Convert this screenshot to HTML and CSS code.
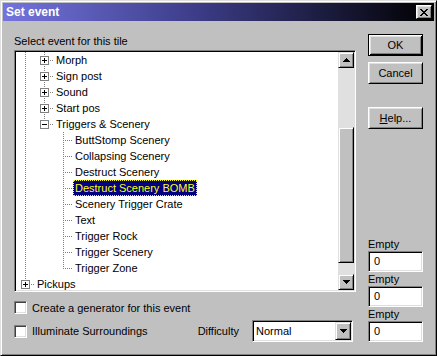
FILE: index.html
```html
<!DOCTYPE html>
<html>
<head>
<meta charset="utf-8">
<title>Set event</title>
<link rel="stylesheet" href="styles.css">
</head>
<body>
<div class="window">
  <div class="titlebar">
    <span class="title">Set event</span>
    <button class="close" aria-label="Close">
      <svg width="8" height="7" viewBox="0 0 8 7"><path fill="#000" d="M0 0h2v1H0zM6 0h2v1H6zM1 1h2v1H1zM5 1h2v1H5zM2 2h4v1H2zM3 3h2v1H3zM2 4h4v1H2zM1 5h2v1H1zM5 5h2v1H5zM0 6h2v1H0zM6 6h2v1H6z"/></svg>
    </button>
  </div>
  <div class="content">
    <div class="left">
      <div class="caption">Select event for this tile</div>
      <div class="tree">
        <div class="items">
          <div class="row"><span class="g v"></span><span class="g bf"><i class="pm plus"></i></span><span class="lbl">Morph</span></div>
          <div class="row"><span class="g v"></span><span class="g bf"><i class="pm plus"></i></span><span class="lbl">Sign post</span></div>
          <div class="row"><span class="g v"></span><span class="g bf"><i class="pm plus"></i></span><span class="lbl">Sound</span></div>
          <div class="row"><span class="g v"></span><span class="g bf"><i class="pm plus"></i></span><span class="lbl">Start pos</span></div>
          <div class="row"><span class="g v"></span><span class="g bt"><i class="pm minus"></i></span><span class="lbl">Triggers &amp; Scenery</span></div>
          <div class="row"><span class="g v"></span><span class="g n"></span><span class="g t"></span><span class="lbl">ButtStomp Scenery</span></div>
          <div class="row"><span class="g v"></span><span class="g n"></span><span class="g t"></span><span class="lbl">Collapsing Scenery</span></div>
          <div class="row"><span class="g v"></span><span class="g n"></span><span class="g t"></span><span class="lbl">Destruct Scenery</span></div>
          <div class="row"><span class="g v"></span><span class="g n"></span><span class="g t"></span><span class="lbl sel">Destruct Scenery BOMB</span></div>
          <div class="row"><span class="g v"></span><span class="g n"></span><span class="g t"></span><span class="lbl">Scenery Trigger Crate</span></div>
          <div class="row"><span class="g v"></span><span class="g n"></span><span class="g t"></span><span class="lbl">Text</span></div>
          <div class="row"><span class="g v"></span><span class="g n"></span><span class="g t"></span><span class="lbl">Trigger Rock</span></div>
          <div class="row"><span class="g v"></span><span class="g n"></span><span class="g t"></span><span class="lbl">Trigger Scenery</span></div>
          <div class="row"><span class="g v"></span><span class="g n"></span><span class="g l"></span><span class="lbl">Trigger Zone</span></div>
          <div class="row"><span class="g bt"><i class="pm plus"></i></span><span class="lbl">Pickups</span></div>
        </div>
        <div class="vscroll">
          <div class="sbtn"><svg width="7" height="4" viewBox="0 0 7 4"><path fill="#000" d="M3 0h1v1H3zM2 1h3v1H2zM1 2h5v1H1zM0 3h7v1H0z"/></svg></div>
          <div class="track upper"></div>
          <div class="thumb"></div>
          <div class="track lower"></div>
          <div class="sbtn"><svg width="7" height="4" viewBox="0 0 7 4"><path fill="#000" d="M0 0h7v1H0zM1 1h5v1H1zM2 2h3v1H2zM3 3h1v1H3z"/></svg></div>
        </div>
      </div>
      <label class="check first"><span class="cbox"></span>Create a generator for this event</label>
      <div class="optrow">
        <label class="check"><span class="cbox"></span>Illuminate Surroundings</label>
        <span class="diff">Difficulty</span>
        <div class="select">
          <span class="val">Normal</span>
          <span class="ddbtn"><svg width="7" height="4" viewBox="0 0 7 4"><path fill="#000" d="M0 0h7v1H0zM1 1h5v1H1zM2 2h3v1H2zM3 3h1v1H3z"/></svg></span>
        </div>
      </div>
    </div>
    <div class="right">
      <button class="btn default">OK</button>
      <button class="btn cancel">Cancel</button>
      <button class="btn help"><u>H</u>elp...</button>
      <div class="fields">
        <div class="field"><div class="flabel">Empty</div><div class="input">0</div></div>
        <div class="field"><div class="flabel">Empty</div><div class="input">0</div></div>
        <div class="field"><div class="flabel">Empty</div><div class="input">0</div></div>
      </div>
    </div>
  </div>
</div>
</body>
</html>
```
FILE: styles.css
```css
* { box-sizing: border-box; margin: 0; padding: 0; }

html, body {
  margin: 0;
  background: #c0c0c0;
  font: 11px "Liberation Sans", Arial, sans-serif;
  color: #000;
}

.window {
  width: 437px;
  height: 356px;
  background: #c0c0c0;
  border: 1px solid;
  border-color: #dfdfdf #000 #000 #dfdfdf;
  box-shadow: inset 1px 1px #fff, inset -1px -1px #808080;
  padding: 2px;
  display: flex;
  flex-direction: column;
}

.titlebar {
  height: 18px;
  flex: none;
  display: flex;
  align-items: center;
  padding-left: 3px;
  background: linear-gradient(90deg, #7474de 0%, #3c3c88 45%, #000000 100%);
}

.title {
  color: #fff;
  font-weight: bold;
  font-size: 12px;
  flex: 1;
}

.close {
  width: 16px;
  height: 14px;
  margin-right: 2px;
  display: flex;
  align-items: center;
  justify-content: center;
  background: #c0c0c0;
  border: 1px solid;
  border-color: #fff #000 #000 #fff;
  box-shadow: inset 1px 1px #dfdfdf, inset -1px -1px #808080;
  padding: 0 0 0 0;
}

.content {
  flex: 1;
  display: flex;
  gap: 12px;
  padding: 13px 11px 11px 11px;
}

.left {
  width: 342px;
  display: flex;
  flex-direction: column;
}

.caption {
  line-height: 14px;
  height: 14px;
  margin-bottom: 2px;
}

.tree {
  width: 342px;
  height: 242px;
  border: 1px solid;
  border-color: #808080 #fff #fff #808080;
  box-shadow: inset 1px 1px #000, inset -1px -1px #dfdfdf;
  padding: 1px;
  background: #fff;
  display: flex;
}

.items {
  flex: 1;
  overflow: hidden;
  background: #fff;
}

.row {
  height: 16px;
  display: flex;
  white-space: nowrap;
}

.g {
  width: 19px;
  height: 16px;
  flex: none;
  display: block;
}

.g.v {
  background: repeating-linear-gradient(to bottom, #808080 0 1px, transparent 1px 2px) 9px 0 / 1px 16px no-repeat;
}

.g.t {
  background:
    repeating-linear-gradient(to right, #808080 0 1px, transparent 1px 2px) 11px 8px / 8px 1px no-repeat,
    repeating-linear-gradient(to bottom, #808080 0 1px, transparent 1px 2px) 9px 0 / 1px 16px no-repeat;
}

.g.l {
  background:
    repeating-linear-gradient(to right, #808080 0 1px, transparent 1px 2px) 11px 8px / 8px 1px no-repeat,
    repeating-linear-gradient(to bottom, #808080 0 1px, transparent 1px 2px) 9px 0 / 1px 9px no-repeat;
}

.g.bf {
  background:
    repeating-linear-gradient(to right, #808080 0 1px, transparent 1px 2px) 15px 8px / 4px 1px no-repeat,
    repeating-linear-gradient(to bottom, #808080 0 1px, transparent 1px 2px) 9px 0 / 1px 16px no-repeat;
}

.g.bt {
  background:
    repeating-linear-gradient(to right, #808080 0 1px, transparent 1px 2px) 15px 8px / 4px 1px no-repeat,
    repeating-linear-gradient(to bottom, #808080 0 1px, transparent 1px 2px) 9px 0 / 1px 4px no-repeat;
}

.pm {
  display: block;
  width: 9px;
  height: 9px;
  margin: 4px 0 0 5px;
  border: 1px solid #808080;
  background: #fff;
}

.pm.plus {
  background:
    linear-gradient(#000, #000) 1px 3px / 5px 1px no-repeat,
    linear-gradient(#000, #000) 3px 1px / 1px 5px no-repeat,
    #fff;
}

.pm.minus {
  background:
    linear-gradient(#000, #000) 1px 3px / 5px 1px no-repeat,
    #fff;
}

.lbl {
  height: 16px;
  line-height: 14px;
  padding: 0 1px;
  border: 1px dotted transparent;
}

.lbl.sel {
  background: #000080;
  color: #ffff00;
  border-color: #ffff00;
}

.vscroll {
  width: 16px;
  flex: none;
  display: flex;
  flex-direction: column;
}

.sbtn, .thumb {
  width: 16px;
  background: #c0c0c0;
  border: 1px solid;
  border-color: #dfdfdf #000 #000 #dfdfdf;
  box-shadow: inset 1px 1px #fff, inset -1px -1px #808080;
}

.sbtn {
  height: 16px;
  display: flex;
  align-items: center;
  justify-content: center;
}

.track {
  background: #e0e0e0;
}

.track.upper { height: 59px; }
.thumb { height: 136px; }
.track.lower { height: 11px; }

.check {
  display: flex;
  align-items: center;
  gap: 5px;
  height: 13px;
  white-space: nowrap;
}

.check.first { margin-top: 9px; }

.cbox {
  width: 13px;
  height: 13px;
  flex: none;
  background: #fff;
  border: 1px solid;
  border-color: #808080 #fff #fff #808080;
  box-shadow: inset 1px 1px #404040, inset -1px -1px #dfdfdf;
}

.optrow {
  margin-top: 6px;
  height: 22px;
  display: flex;
  align-items: center;
}

.diff {
  margin-left: auto;
}

.select {
  width: 101px;
  height: 22px;
  margin-left: 13px;
  margin-right: 3px;
  display: flex;
  align-items: stretch;
  background: #fff;
  border: 1px solid;
  border-color: #808080 #fff #fff #808080;
  box-shadow: inset 1px 1px #000, inset -1px -1px #dfdfdf;
  padding: 1px;
}

.val {
  flex: 1;
  line-height: 18px;
  padding-left: 2px;
}

.ddbtn {
  width: 16px;
  display: flex;
  align-items: center;
  justify-content: center;
  background: #c0c0c0;
  border: 1px solid;
  border-color: #dfdfdf #000 #000 #dfdfdf;
  box-shadow: inset 1px 1px #fff, inset -1px -1px #808080;
}

.right {
  width: 55px;
  display: flex;
  flex-direction: column;
}

.btn {
  width: 55px;
  height: 22px;
  font: inherit;
  color: #000;
  background: #c0c0c0;
  border: 1px solid;
  border-color: #fff #000 #000 #fff;
  box-shadow: inset 1px 1px #dfdfdf, inset -1px -1px #808080;
  text-align: center;
}

.btn.default {
  border: 1px solid #000;
  box-shadow: inset 1px 1px #fff, inset -1px -1px #000, inset 2px 2px #dfdfdf, inset -2px -2px #808080;
}

.btn.cancel { margin-top: 6px; }
.btn.help { margin-top: 23px; }

.fields {
  margin-top: auto;
  display: flex;
  flex-direction: column;
}

.flabel {
  height: 14px;
  line-height: 14px;
}

.input {
  width: 55px;
  height: 21px;
  background: #fff;
  border: 1px solid;
  border-color: #808080 #fff #fff #808080;
  box-shadow: inset 1px 1px #000, inset -1px -1px #dfdfdf;
  padding-left: 5px;
  line-height: 19px;
}
```
